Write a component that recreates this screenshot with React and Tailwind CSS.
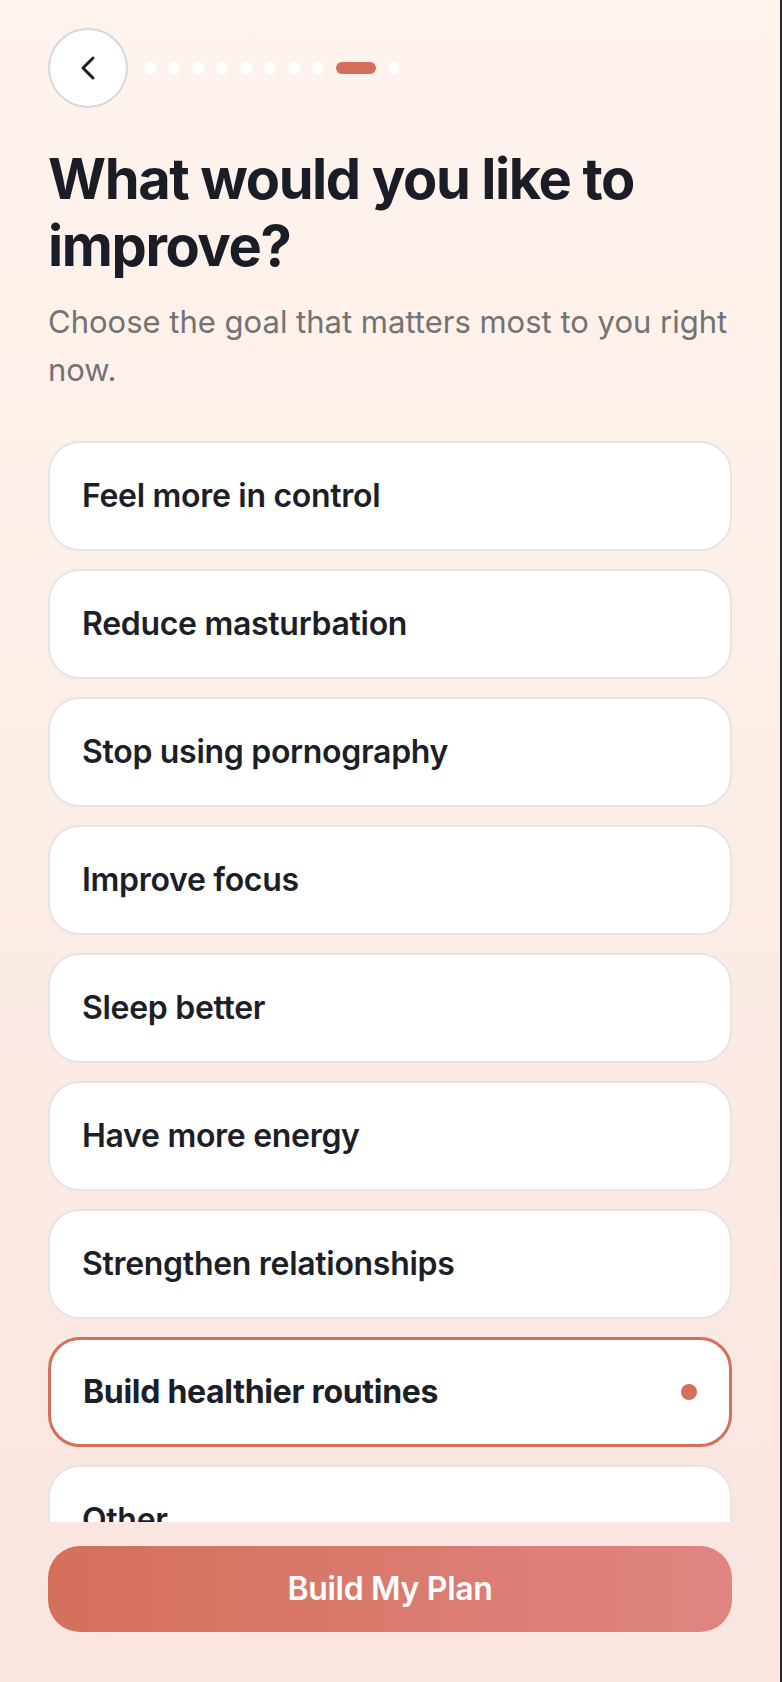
import React, { useState } from 'react';
import { ChevronLeft } from 'lucide-react';

const goals = [
  'Feel more in control',
  'Reduce masturbation',
  'Stop using pornography',
  'Improve focus',
  'Sleep better',
  'Have more energy',
  'Strengthen relationships',
  'Build healthier routines',
  'Other',
];

export default function App() {
  const [selected, setSelected] = useState('Build healthier routines');
  const step = 8;

  return (
    <div className="h-[1682px] w-full flex flex-col overflow-hidden bg-gradient-to-b from-[#fef4ed] to-[#fae5e0] border-r-2 border-[#2b2b2b] font-['Inter',sans-serif]">
      {/* Scrollable content */}
      <div className="flex-1 overflow-hidden pl-12 pr-12 pt-[28px]">
        {/* Header */}
        <div className="flex items-center h-20">
          <button className="w-20 h-20 rounded-full bg-white border-2 border-[#d6d8dc] flex items-center justify-center text-[#1a1d26] shrink-0">
            <ChevronLeft size={40} strokeWidth={1.8} />
          </button>
          <div className="flex items-center gap-3 ml-4">
            {Array.from({ length: 10 }).map((_, i) =>
              i === step ? (
                <div key={i} className="w-10 h-3 rounded-full bg-[#d4705a]" />
              ) : (
                <div key={i} className="w-3 h-3 rounded-full bg-white" />
              )
            )}
          </div>
        </div>

        <h1 className="mt-[38px] text-[56px] leading-[1.2] font-bold text-[#1a1d26] tracking-[-1.4px]">
          What would you like to improve?
        </h1>
        <p className="mt-[18px] text-[31px] leading-[48px] text-[#737373]">
          Choose the goal that matters most to you right now.
        </p>

        <div className="mt-[47px] flex flex-col gap-[18px]">
          {goals.map((g) => {
            const active = selected === g;
            return (
              <button
                key={g}
                onClick={() => setSelected(g)}
                className={`h-[110px] shrink-0 w-full rounded-[32px] bg-white flex items-center justify-between text-left pr-8 ${
                  active
                    ? 'border-[3px] border-[#d4705a] pl-8 font-bold'
                    : 'border-2 border-[#e7e5e3] pl-8 font-semibold'
                }`}
              >
                <span className="text-[32px] text-[#1c1f27] tracking-[-0.3px]">{g}</span>
                {active && <span className="w-4 h-4 rounded-full bg-[#d4705a]" />}
              </button>
            );
          })}
        </div>
      </div>

      {/* Bottom bar */}
      <div className="px-12 pt-6 pb-[50px] bg-[#fae6e1]">
        <button className="w-full h-[86px] rounded-[32px] bg-gradient-to-r from-[#d4705a] to-[#e08582] text-white text-[32px] font-semibold tracking-[-0.3px]">
          Build My Plan
        </button>
      </div>
    </div>
  );
}
